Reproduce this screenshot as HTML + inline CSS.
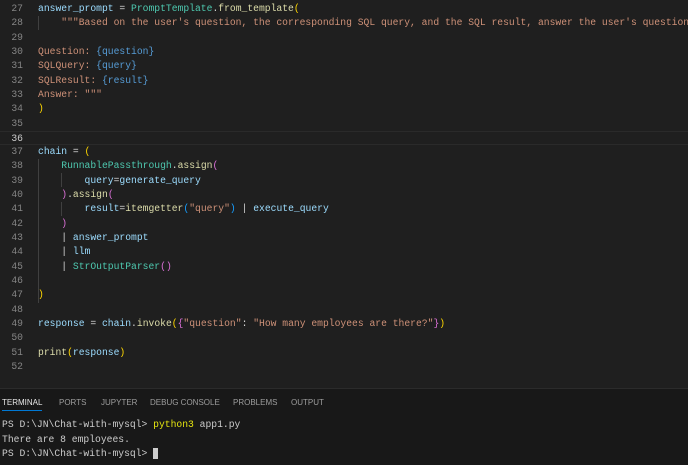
<!DOCTYPE html>
<html><head><style>
body{margin:0;width:688px;height:464px;background:#1f1f1f;overflow:hidden;font-family:"Liberation Mono",monospace;font-size:9.7px;}
.ed{position:absolute;left:0;top:2px;width:688px}
.l{height:14.32px;line-height:14.32px;position:relative;white-space:pre;color:#9cdcfe}
.n{position:absolute;left:0;width:23px;text-align:right;color:#858585}
.c{position:absolute;left:38px}
.cur{border-top:1px solid #2a2a2a;border-bottom:1px solid #2a2a2a;box-sizing:border-box}
.cur .n{color:#cccccc}
.cl{color:#4ec9b0}.f{color:#dcdcaa}.s{color:#ce9178}.o{color:#d4d4d4}.b1{color:#ffd700}.b2{color:#da70d6}.b3{color:#179fff}.k{color:#569cd6}
.g{position:absolute;width:1px;background:#404040}
.panel{position:absolute;left:0;top:388px;width:688px;height:76px;background:#181818;border-top:1px solid #2b2b2b}
.tabs{position:absolute;top:9px;left:2px;font-family:"Liberation Sans",sans-serif;font-size:8px;color:#9d9d9d;white-space:nowrap}
.tabs span{position:absolute}
.term{position:absolute;left:2px;top:29px;color:#cccccc}
.term div{height:14.5px;line-height:14.5px;white-space:pre}
</style></head><body>
<div class="g" style="left:38px;top:16px;height:14px"></div>
<div class="g" style="left:38px;top:159px;height:144px"></div>
<div class="g" style="left:61px;top:173px;height:14px"></div>
<div class="g" style="left:61px;top:202px;height:14px"></div>
<div class="ed">
<div class="l"><span class="n">27</span><span class="c">answer_prompt <span class="o">=</span> <span class="cl">PromptTemplate</span><span class="o">.</span><span class="f">from_template</span><span class="b1">(</span></span></div>
<div class="l"><span class="n">28</span><span class="c s">    """Based on the user's question, the corresponding SQL query, and the SQL result, answer the user's question.</span></div>
<div class="l"><span class="n">29</span></div>
<div class="l"><span class="n">30</span><span class="c s">Question: <span class="k">{question}</span></span></div>
<div class="l"><span class="n">31</span><span class="c s">SQLQuery: <span class="k">{query}</span></span></div>
<div class="l"><span class="n">32</span><span class="c s">SQLResult: <span class="k">{result}</span></span></div>
<div class="l"><span class="n">33</span><span class="c s">Answer: """</span></div>
<div class="l"><span class="n">34</span><span class="c b1">)</span></div>
<div class="l"><span class="n">35</span></div>
<div class="l cur"><span class="n">36</span></div>
<div class="l"><span class="n">37</span><span class="c">chain <span class="o">=</span> <span class="b1">(</span></span></div>
<div class="l"><span class="n">38</span><span class="c">    <span class="cl">RunnablePassthrough</span><span class="o">.</span><span class="f">assign</span><span class="b2">(</span></span></div>
<div class="l"><span class="n">39</span><span class="c">        query<span class="o">=</span>generate_query</span></div>
<div class="l"><span class="n">40</span><span class="c">    <span class="b2">)</span><span class="o">.</span><span class="f">assign</span><span class="b2">(</span></span></div>
<div class="l"><span class="n">41</span><span class="c">        result<span class="o">=</span><span class="f">itemgetter</span><span class="b3">(</span><span class="s">"query"</span><span class="b3">)</span> <span class="o">|</span> execute_query</span></div>
<div class="l"><span class="n">42</span><span class="c">    <span class="b2">)</span></span></div>
<div class="l"><span class="n">43</span><span class="c">    <span class="o">|</span> answer_prompt</span></div>
<div class="l"><span class="n">44</span><span class="c">    <span class="o">|</span> llm</span></div>
<div class="l"><span class="n">45</span><span class="c">    <span class="o">|</span> <span class="cl">StrOutputParser</span><span class="b2">()</span></span></div>
<div class="l"><span class="n">46</span></div>
<div class="l"><span class="n">47</span><span class="c b1">)</span></div>
<div class="l"><span class="n">48</span></div>
<div class="l"><span class="n">49</span><span class="c">response <span class="o">=</span> chain<span class="o">.</span><span class="f">invoke</span><span class="b1">(</span><span class="b2">{</span><span class="s">"question"</span><span class="o">:</span> <span class="s">"How many employees are there?"</span><span class="b2">}</span><span class="b1">)</span></span></div>
<div class="l"><span class="n">50</span></div>
<div class="l"><span class="n">51</span><span class="c"><span class="f">print</span><span class="b1">(</span>response<span class="b1">)</span></span></div>
<div class="l"><span class="n">52</span></div>
</div>
<div class="panel">
<div class="tabs">
<span style="left:0;color:#e7e7e7">TERMINAL</span>
<span style="left:57px">PORTS</span>
<span style="left:99px">JUPYTER</span>
<span style="left:148px">DEBUG CONSOLE</span>
<span style="left:231px">PROBLEMS</span>
<span style="left:289px">OUTPUT</span>
</div>
<div style="position:absolute;left:2px;top:21px;width:40px;height:1px;background:#0078d4"></div>
<div class="term"><div>PS D:\JN\Chat-with-mysql&gt; <span style="color:#e5e510">python3</span> app1.py</div><div>There are 8 employees.</div><div>PS D:\JN\Chat-with-mysql&gt; <span style="display:inline-block;width:5px;height:11px;background:#cccccc;vertical-align:middle"></span></div></div>
</div>
</body></html>
